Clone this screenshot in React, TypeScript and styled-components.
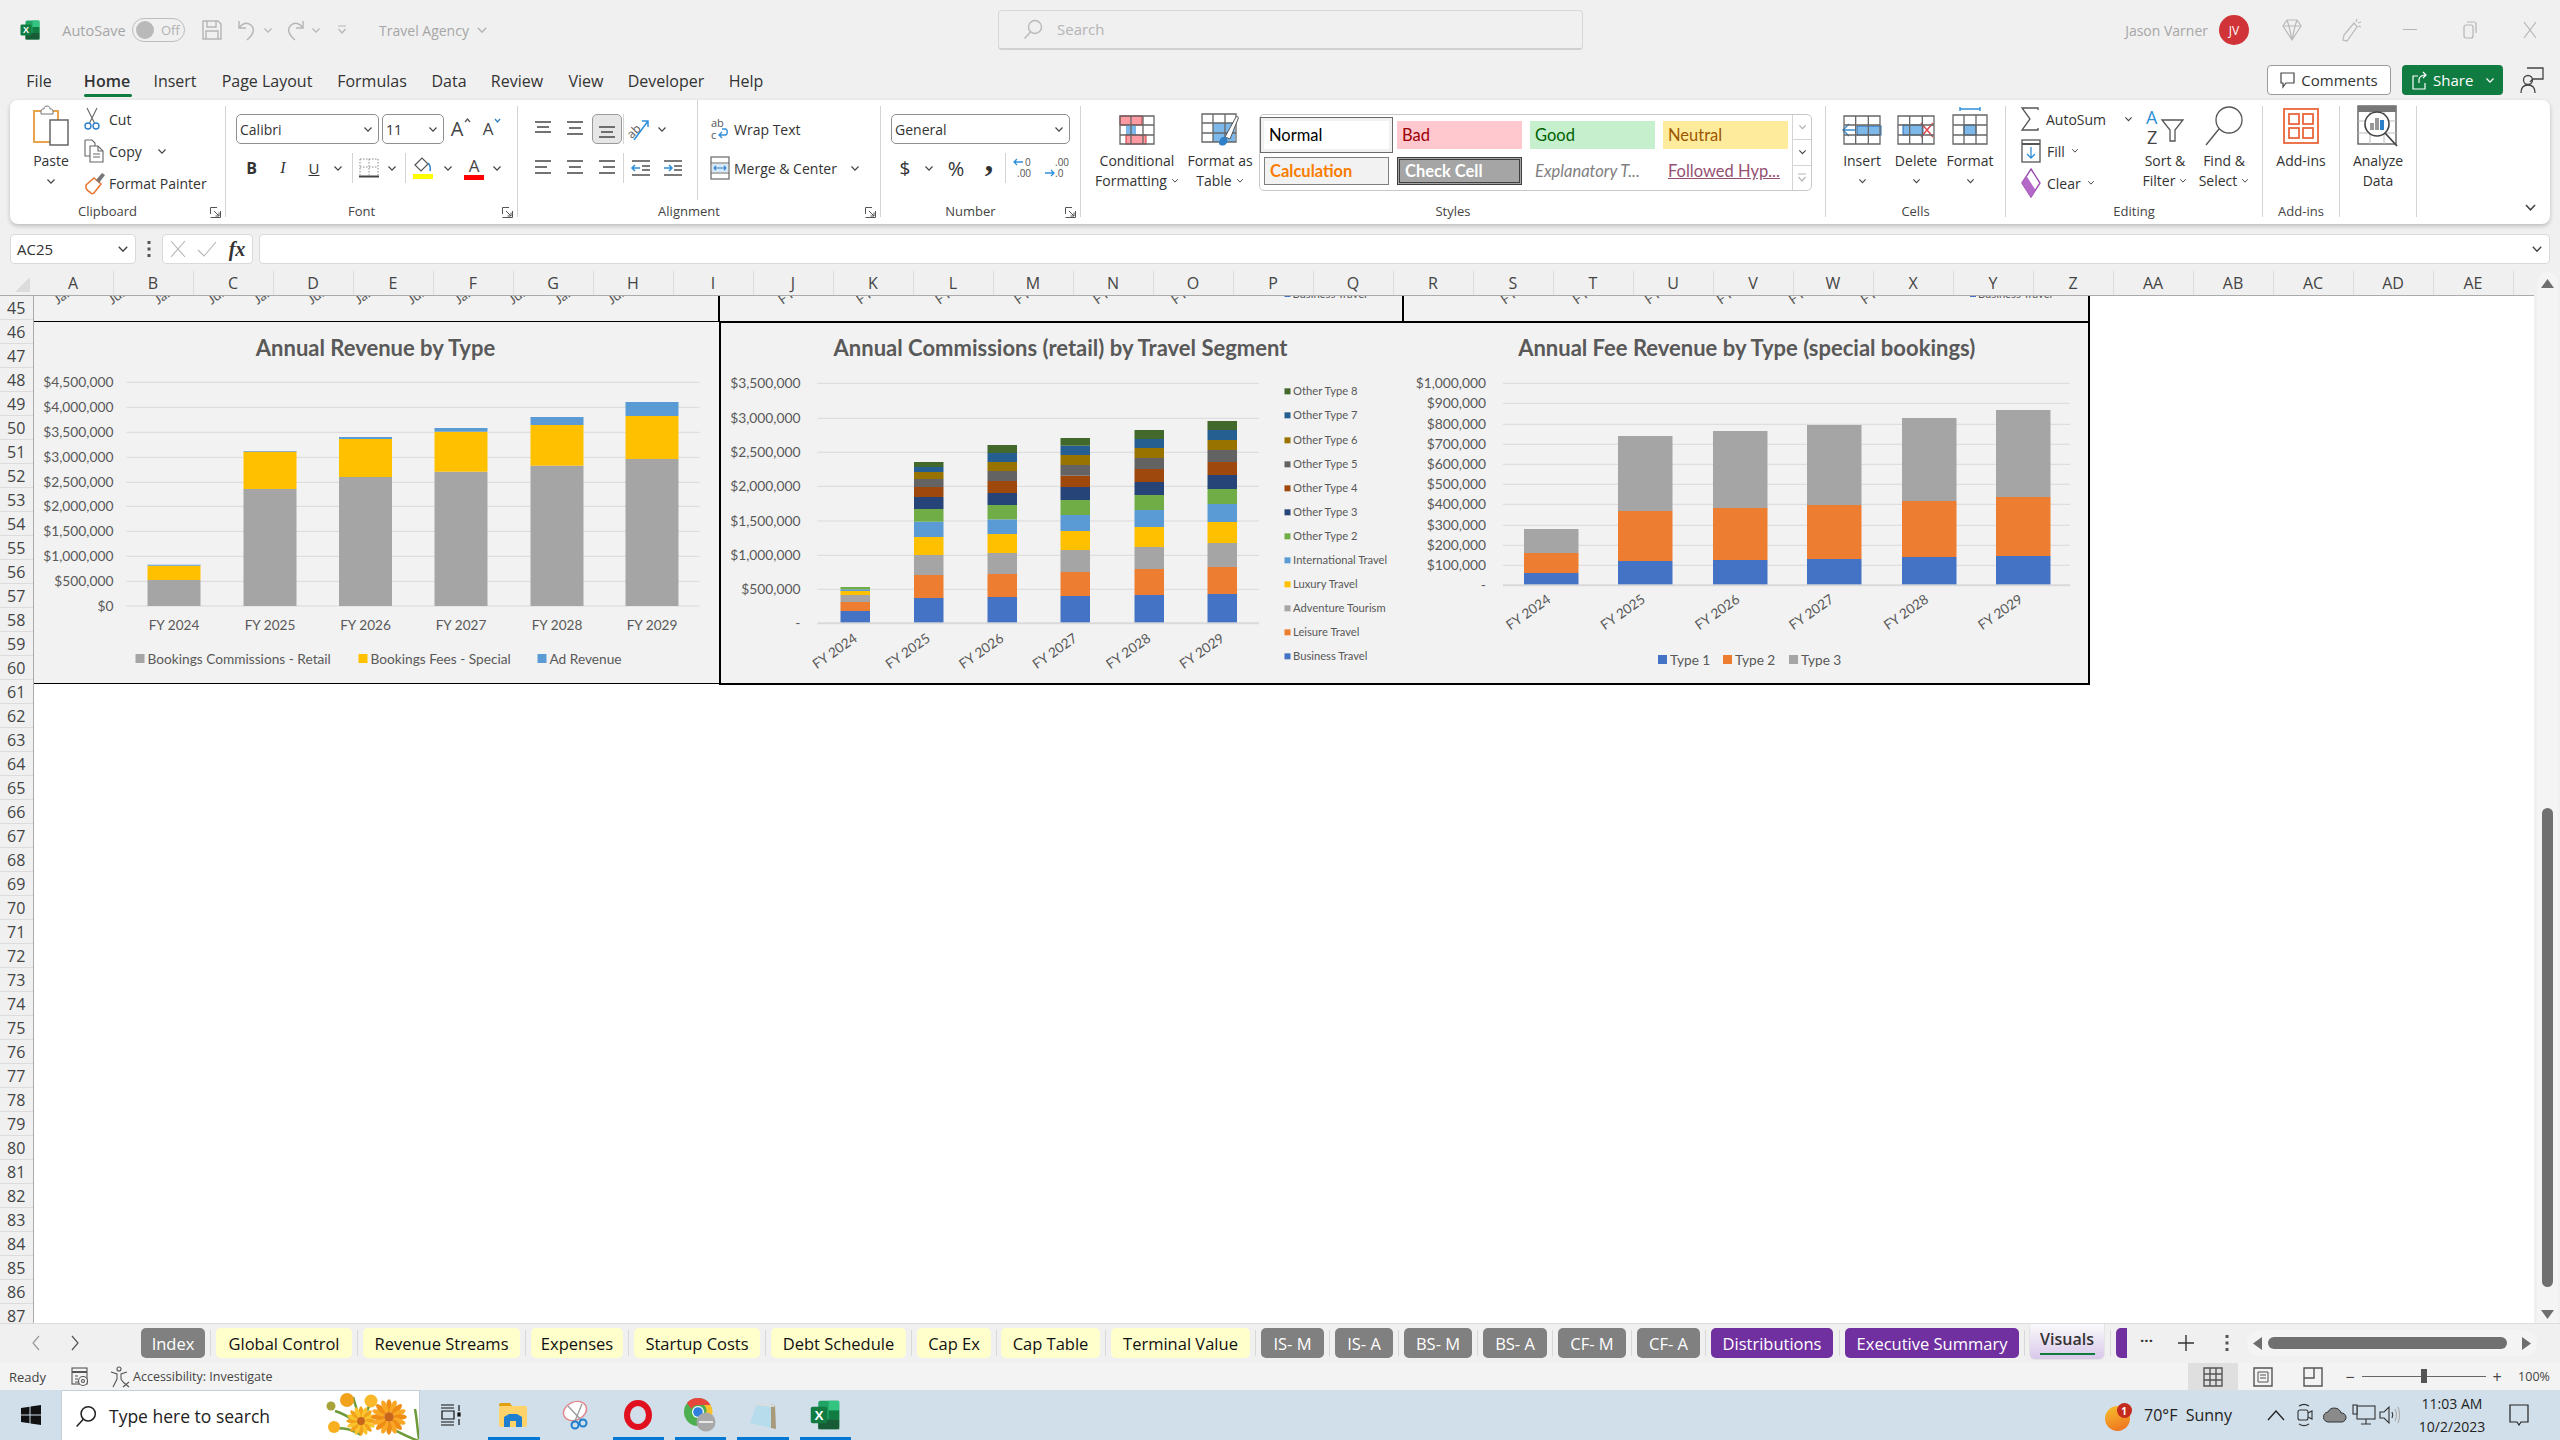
import React from 'react';
import styled, { createGlobalStyle } from 'styled-components';

const UI = `"Open Sans", "Noto Sans", sans-serif`;
const CAL = `Lato, "Liberation Sans", sans-serif`;

const Global = createGlobalStyle`
  html, body { margin: 0; padding: 0; background: #f0f0f0; }
  body { width: 2560px; height: 1440px; overflow: hidden; font-family: ${UI}; color: #333; }
  * { box-sizing: border-box; }
  svg { display: block; flex: none; overflow: visible; }
`;

const Window = styled.div`
  width: 2560px;
  height: 1440px;
  display: flex;
  flex-direction: column;
  overflow: hidden;
`;

const Cell = styled.div<{ $w?: number; $ml?: number; $c?: string; $fs?: number }>`
  display: flex;
  align-items: center;
  justify-content: center;
  flex: none;
  height: 100%;
  white-space: nowrap;
  width: ${p => (p.$w ? `${p.$w}px` : 'auto')};
  margin-left: ${p => p.$ml || 0}px;
  color: ${p => p.$c || 'inherit'};
  font-size: ${p => p.$fs || 14}px;
`;

/* ---------- title bar ---------- */
const TitleBar = styled.div`
  height: 62px;
  display: flex;
  flex: none;
`;
const TitleLeft = styled.div`
  width: 998px;
  height: 60px;
  padding-left: 20px;
  display: flex;
  color: #a6a6a6;
`;
const SearchBox = styled.div`
  width: 585px;
  height: 40px;
  margin-top: 10px;
  padding: 0 0 2px 24px;
  display: flex;
  align-items: center;
  gap: 14px;
  border: 1px solid #d8d8d8;
  border-bottom: 2px solid #d0d0d0;
  border-radius: 4px;
  font-size: 15px;
  color: #b4b4b4;
`;
const TitleRight = styled.div`
  flex: 1;
  height: 60px;
  display: flex;
  justify-content: flex-end;
  color: #a6a6a6;
`;
const Avatar = styled.div`
  width: 30px;
  height: 30px;
  border-radius: 50%;
  background: #d13438;
  color: #fff;
  font-size: 12px;
  display: flex;
  align-items: center;
  justify-content: center;
`;
const Toggle = styled.div`
  width: 53px;
  height: 24px;
  border: 1.5px solid #bdbdbd;
  border-radius: 12px;
  display: flex;
  align-items: center;
  padding-left: 3px;
  gap: 7px;
  font-size: 13px;
  color: #b0b0b0;
  &::before {
    content: '';
    width: 18px;
    height: 18px;
    border-radius: 50%;
    background: #b9b9b9;
  }
`;

/* ---------- menu ---------- */
const MenuBar = styled.div`
  height: 38px;
  padding-left: 15px;
  display: flex;
  align-items: flex-start;
  flex: none;
`;
const MenuItem = styled.div<{ $w: number; $on?: boolean }>`
  width: ${p => p.$w}px;
  height: 38px;
  display: flex;
  align-items: center;
  justify-content: center;
  font-size: 16px;
  color: #333;
  position: relative;
  font-weight: ${p => (p.$on ? 600 : 400)};
  &::after {
    content: ${p => (p.$on ? "''" : 'none')};
    position: absolute;
    left: 21px;
    right: 19px;
    top: 32px;
    height: 3px;
    background: #107c41;
    border-radius: 2px;
  }
`;
const MenuEnd = styled.div`
  margin-left: auto;
  display: flex;
  align-items: center;
  height: 30px;
  margin-top: 3px;
`;
const CommentsBtn = styled.div`
  width: 124px;
  height: 30px;
  background: #fff;
  border: 1px solid #9a9a9a;
  border-radius: 4px;
  display: flex;
  align-items: center;
  justify-content: center;
  gap: 6px;
  font-size: 15px;
`;
const ShareBtn = styled.div`
  width: 101px;
  height: 30px;
  margin-left: 11px;
  background: #107c41;
  color: #fff;
  border-radius: 4px;
  display: flex;
  align-items: center;
  padding-left: 10px;
  gap: 6px;
  font-size: 15px;
`;

/* ---------- ribbon ---------- */
const Ribbon = styled.div`
  margin: 0 10px;
  height: 124px;
  background: #fff;
  border-radius: 8px;
  box-shadow: 0 2px 4px rgba(0, 0, 0, 0.22);
  display: flex;
  flex: none;
  position: relative;
  font-size: 14px;
`;
const Group = styled.div<{ $w: number }>`
  width: ${p => p.$w}px;
  flex: none;
  display: flex;
  flex-direction: column;
  position: relative;
`;
const GroupBody = styled.div`
  height: 100px;
  display: flex;
`;
const GroupLabel = styled.div<{ $launch?: boolean }>`
  height: 22px;
  display: flex;
  align-items: center;
  justify-content: center;
  font-size: 13px;
  color: #444;
  padding-right: ${p => (p.$launch ? 20 : 0)}px;
`;
const Launcher = styled.div`
  position: absolute;
  right: 4px;
  bottom: 6px;
`;
const GroupSep = styled.div`
  width: 1px;
  margin: 6px 0 7px;
  background: #d4d4d4;
  flex: none;
`;
const Rows = styled.div<{ $w?: number; $pl?: number; $sep?: boolean }>`
  display: flex;
  flex-direction: column;
  padding-top: 14px;
  flex: none;
  width: ${p => (p.$w ? `${p.$w}px` : 'auto')};
  padding-left: ${p => p.$pl || 0}px;
  border-left: ${p => (p.$sep ? '1px solid #d4d4d4' : 'none')};
`;
const Row = styled.div<{ $h: number; $mt?: number }>`
  display: flex;
  align-items: center;
  height: ${p => p.$h}px;
  margin-top: ${p => p.$mt || 0}px;
`;
const Combo = styled.div<{ $w: number; $ml?: number }>`
  width: ${p => p.$w}px;
  margin-left: ${p => p.$ml || 0}px;
  height: 30px;
  flex: none;
  border: 1px solid #8f8f8f;
  border-radius: 5px;
  display: flex;
  align-items: center;
  justify-content: space-between;
  padding: 0 5px 0 3px;
  font-size: 14px;
`;
const RowSep = styled.div`
  width: 1px;
  height: 30px;
  background: #d4d4d4;
  flex: none;
`;
const Pressed = styled.div`
  width: 30px;
  height: 30px;
  background: #e6e6e6;
  border: 1px solid #9a9a9a;
  border-radius: 5px;
  display: flex;
  align-items: center;
  justify-content: center;
`;
const Big = styled.div<{ $w: number; $ml?: number }>`
  width: ${p => p.$w}px;
  margin-left: ${p => p.$ml || 0}px;
  flex: none;
  display: flex;
  flex-direction: column;
  align-items: center;
  font-size: 14px;
  line-height: 20px;
  color: #333;
  white-space: nowrap;
`;
const BigIcon = styled.div<{ $pt?: number }>`
  height: 51px;
  padding-top: ${p => p.$pt || 0}px;
  display: flex;
  align-items: center;
  justify-content: center;
`;
const BigLine = styled.div`
  height: 20px;
  display: flex;
  align-items: center;
  gap: 4px;
`;
const SmallList = styled.div<{ $w?: number; $pl: number }>`
  width: ${p => (p.$w ? `${p.$w}px` : 'auto')};
  padding: 3px 0 0 ${p => p.$pl}px;
  flex: none;
  display: flex;
  flex-direction: column;
`;
const SmallItem = styled.div<{ $gap?: number }>`
  height: 32px;
  display: flex;
  align-items: center;
  gap: ${p => p.$gap || 7}px;
  white-space: nowrap;
`;
const GrowLetter = styled.span<{ $fs: number }>`
  font-size: ${p => p.$fs}px;
  line-height: 24px;
  color: #444;
`;
const GrowWrap = styled.div`
  display: flex;
  align-items: flex-start;
  gap: 1px;
  height: 24px;
`;
const ColorLetter = styled.div<{ $bar: string }>`
  width: 20px;
  height: 24px;
  font-size: 17px;
  line-height: 19px;
  text-align: center;
  color: #444;
  border-bottom: 5px solid ${p => p.$bar};
`;
const Bold = styled(Cell)`
  font-weight: 700;
`;
const Italic = styled(Cell)`
  font-style: italic;
  font-family: "Liberation Serif", serif;
`;
const Under = styled(Cell)`
  text-decoration: underline;
`;
const CommaGlyph = styled(Cell)`
  font-weight: 700;
  font-family: "Liberation Serif", serif;
  padding-bottom: 16px;
`;
const Gallery = styled.div`
  width: 553px;
  height: 77px;
  margin: 14px 0 0 -1px;
  flex: none;
  border: 1px solid #c8c8c8;
  border-radius: 5px;
  padding-left: 4px;
  display: flex;
`;
const StyleGrid = styled.div`
  display: grid;
  grid-template-columns: repeat(4, 125px);
  grid-auto-rows: 28px;
  column-gap: 8px;
  row-gap: 8px;
  padding-top: 6px;
`;
const StyleCell = styled.div<{ $bg?: string; $c: string; $bold?: boolean; $it?: boolean; $bd?: string; $u?: boolean }>`
  background: ${p => p.$bg || 'transparent'};
  color: ${p => p.$c};
  font-weight: ${p => (p.$bold ? 700 : 400)};
  font-style: ${p => (p.$it ? 'italic' : 'normal')};
  border: ${p => p.$bd || 'none'};
  font-family: ${CAL};
  font-size: 16.5px;
  padding-left: 5px;
  display: flex;
  align-items: center;
  white-space: nowrap;
  position: relative;
  text-decoration: ${p => (p.$u ? 'underline' : 'none')};
`;
const NormalCell = styled(StyleCell)`
  outline: 1px solid #6a6a6a;
  outline-offset: 3px;
  box-shadow: 0 0 0 3px #f1f1f1;
`;
const GalleryScroll = styled.div`
  width: 19px;
  margin-left: auto;
  border-left: 1px solid #d4d4d4;
  display: flex;
  flex-direction: column;
`;
const GalleryBtn = styled.div<{ $line?: boolean }>`
  flex: 1;
  display: flex;
  align-items: center;
  justify-content: center;
  border-top: ${p => (p.$line ? '1px solid #d4d4d4' : 'none')};
`;
const Collapse = styled.div`
  position: absolute;
  right: 13px;
  bottom: 12px;
`;

/* ---------- formula bar ---------- */
const FormulaBar = styled.div`
  height: 30px;
  margin-top: 10px;
  padding: 0 10px;
  display: flex;
  flex: none;
`;
const FieldBox = styled.div<{ $w?: number }>`
  width: ${p => (p.$w ? `${p.$w}px` : 'auto')};
  flex: ${p => (p.$w ? 'none' : '1')};
  height: 30px;
  background: #fff;
  border: 1px solid #dadada;
  border-radius: 4px;
  display: flex;
  align-items: center;
  font-size: 15px;
`;
const NameBox = styled(FieldBox)`
  padding: 0 6px;
  justify-content: space-between;
`;
const FormulaInput = styled(FieldBox)`
  padding-right: 6px;
  justify-content: flex-end;
`;
const FxMark = styled(Cell)`
  font-family: "Liberation Serif", serif;
  font-style: italic;
  font-weight: 700;
`;

/* ---------- sheet ---------- */
const Sheet = styled.div`
  flex: 1;
  margin-top: 6px;
  display: flex;
  min-height: 0;
`;
const SheetMain = styled.div`
  width: 2534px;
  flex: none;
  display: flex;
  flex-direction: column;
`;
const ColHeader = styled.div`
  height: 26px;
  display: flex;
  border-bottom: 1px solid #ababab;
  flex: none;
`;
const Corner = styled.div`
  width: 33.5px;
  flex: none;
  position: relative;
  &::after {
    content: '';
    position: absolute;
    right: 4px;
    bottom: 3px;
    border-left: 15px solid transparent;
    border-bottom: 15px solid #dcdcdc;
  }
`;
const ColHead = styled.div`
  width: 80px;
  flex: none;
  margin-top: 1px;
  padding-bottom: 1px;
  border-right: 1px solid #dcdcdc;
  display: flex;
  align-items: center;
  justify-content: center;
  font-size: 16px;
  color: #444;
`;
const SheetBody = styled.div`
  flex: 1;
  display: flex;
  overflow: hidden;
  min-height: 0;
`;
const RowHeads = styled.div`
  width: 33.5px;
  flex: none;
  border-right: 1px solid #ababab;
`;
const RowHead = styled.div`
  height: 24px;
  border-bottom: 1px solid #dcdcdc;
  display: flex;
  align-items: center;
  justify-content: center;
  font-size: 16px;
  color: #444;
`;
const Canvas = styled.div`
  flex: 1;
  background: #fff;
`;
const BandRow = styled.div`
  display: flex;
  height: 25px;
`;
const BandPart = styled.div<{ $w: number; $bl?: number; $br?: number }>`
  width: ${p => p.$w}px;
  flex: none;
  background: #f2f2f2;
  border-left: ${p => p.$bl || 0}px solid #000;
  border-right: ${p => p.$br || 0}px solid #000;
  overflow: hidden;
`;
const ChartRow = styled.div`
  display: flex;
  align-items: flex-start;
`;
const ChartCard = styled.div<{ $w: number; $h: number; $heavy?: boolean; $right?: boolean; $noleft?: boolean }>`
  width: ${p => p.$w}px;
  height: ${p => p.$h}px;
  flex: none;
  background: #f2f2f2;
  border-style: solid;
  border-color: #000;
  border-width: ${p => (p.$heavy ? 2 : 1)}px ${p => (p.$right ? 2 : 0)}px ${p => (p.$heavy ? 2 : 1)}px ${p => (p.$heavy && !p.$noleft ? 2 : 0)}px;
`;
const ChartSvg = styled.svg`
  width: 100%;
  height: 100%;
  font-family: ${CAL};
`;
const ChartTitle = styled.text`
  font-size: 22px;
  font-weight: 700;
  fill: #595959;
  text-anchor: middle;
`;
const Tick = styled.text`
  font-size: 13.8px;
  fill: #595959;
  text-anchor: end;
`;
const Cat = styled.text<{ $start?: boolean }>`
  font-size: 13.6px;
  fill: #595959;
  text-anchor: ${p => (p.$start ? 'start' : 'middle')};
`;
const Legend = styled.text<{ $fs?: number }>`
  font-size: ${p => p.$fs || 13.7}px;
  fill: #595959;
`;
const VScroll = styled.div`
  flex: 1;
  padding: 2px 2px 0 3px;
  display: flex;
`;
const VTrack = styled.div`
  flex: 1;
  background: #f4f4f4;
  border-radius: 10px 10px 0 0;
  display: flex;
  flex-direction: column;
  align-items: center;
  padding-top: 7px;
`;
const VThumb = styled.div`
  width: 11px;
  height: 479px;
  margin-top: 520px;
  background: #707070;
  border-radius: 6px;
`;
const VArrowDown = styled.div`
  margin-top: auto;
  margin-bottom: 4px;
`;

/* ---------- tabs ---------- */
const TabBar = styled.div`
  height: 40px;
  border-top: 1px solid #dcdcdc;
  display: flex;
  align-items: flex-start;
  padding: 4px 0 0 14px;
  flex: none;
  overflow: hidden;
`;
const NavCell = styled.div<{ $w: number; $mr?: number }>`
  width: ${p => p.$w}px;
  height: 30px;
  margin-right: ${p => p.$mr || 0}px;
  flex: none;
  display: flex;
  align-items: center;
  justify-content: center;
`;
const Dots = styled.span`
  font-size: 15px;
  font-weight: 700;
  padding-bottom: 6px;
`;
const Tab = styled.div<{ $w: number; $bg: string; $c: string }>`
  width: ${p => p.$w}px;
  height: 30px;
  flex: none;
  background: ${p => p.$bg};
  color: ${p => p.$c};
  border-radius: 5px;
  display: flex;
  align-items: center;
  justify-content: center;
  font-size: 16.5px;
  white-space: nowrap;
`;
const TabGap = styled.div<{ $w: number }>`
  width: ${p => p.$w}px;
  height: 26px;
  margin-top: 2px;
  flex: none;
  display: flex;
  justify-content: center;
  &::after {
    content: '';
    width: 1px;
    background: #d8d8d8;
  }
`;
const ActiveTab = styled.div`
  width: 74px;
  height: 36px;
  margin-top: -5px;
  flex: none;
  background: linear-gradient(#fbfbfb, #d8c8ea);
  border-radius: 0 0 5px 5px;
  box-shadow: 0 0 0 1px #e4e4e4;
  color: #333;
  font-size: 16px;
  font-weight: 600;
  display: flex;
  justify-content: center;
  padding-top: 5px;
  position: relative;
  &::after {
    content: '';
    position: absolute;
    left: 10px;
    right: 9px;
    bottom: 4px;
    height: 2px;
    background: #107c41;
  }
`;
const PeekTab = styled.div`
  width: 11px;
  height: 30px;
  flex: none;
  background: #7030a0;
  border-radius: 5px 0 0 5px;
`;
const HTrack = styled.div`
  width: 290px;
  height: 26px;
  margin-top: 2px;
  flex: none;
  background: #f4f4f4;
  border-radius: 13px;
  display: flex;
  align-items: center;
  padding: 0 6px;
`;
const HThumb = styled.div`
  width: 239px;
  height: 12px;
  margin: 0 15px 0 6px;
  background: #707070;
  border-radius: 6px;
  flex: none;
`;

/* ---------- status ---------- */
const StatusBar = styled.div`
  height: 27px;
  background: #f3f3f3;
  display: flex;
  align-items: center;
  flex: none;
  font-size: 13px;
  color: #444;
  padding-left: 9px;
`;
const StatusRight = styled.div`
  margin-left: auto;
  display: flex;
  height: 27px;
  align-items: center;
`;
const ViewBtn = styled.div<{ $on?: boolean }>`
  width: 50px;
  height: 27px;
  background: ${p => (p.$on ? '#dfdfdf' : 'transparent')};
  display: flex;
  align-items: center;
  justify-content: center;
`;
const Slider = styled.div`
  width: 124px;
  height: 1px;
  background: #666;
  position: relative;
  &::after {
    content: '';
    position: absolute;
    left: 59px;
    top: -7px;
    width: 6px;
    height: 14px;
    background: #555;
  }
`;

/* ---------- taskbar ---------- */
const Taskbar = styled.div`
  height: 50px;
  background: #d1dfea;
  display: flex;
  flex: none;
`;
const TaskSearch = styled.div`
  width: 359px;
  height: 50px;
  background: #fff;
  border: 1px solid #c6cfd6;
  border-bottom: none;
  display: flex;
  align-items: center;
  padding-left: 13px;
  gap: 12px;
  font-size: 17.5px;
  color: #222;
  position: relative;
  overflow: hidden;
`;
const Flowers = styled.div`
  position: absolute;
  right: 0;
  top: 0;
`;
const TaskIcon = styled.div<{ $open?: boolean }>`
  width: 62.3px;
  height: 50px;
  flex: none;
  display: flex;
  align-items: center;
  justify-content: center;
  position: relative;
  &::after {
    content: ${p => (p.$open ? "''" : 'none')};
    position: absolute;
    left: 6px;
    right: 5px;
    bottom: 0;
    height: 3px;
    background: #0078d4;
  }
`;
const Tray = styled.div`
  margin-left: auto;
  display: flex;
  height: 50px;
  color: #222;
`;
const TrayText = styled(Cell)`
  justify-content: flex-start;
  padding-left: 2px;
`;
const Clock = styled.div`
  width: 100px;
  display: flex;
  flex-direction: column;
  align-items: center;
  justify-content: center;
  font-size: 14px;
  line-height: 23px;
`;
const WeatherBadge = styled.div`
  width: 32px;
  height: 38px;
  margin-right: 12px;
  flex: none;
  position: relative;
  &::before {
    content: '';
    position: absolute;
    left: 2px;
    top: 10px;
    width: 25px;
    height: 25px;
    border-radius: 50%;
    background: linear-gradient(160deg, #f6c12e, #ee6c1e);
  }
`;
const BadgeDot = styled.div`
  position: absolute;
  left: 14px;
  top: 7px;
  width: 15px;
  height: 15px;
  border-radius: 50%;
  background: #c42b1c;
  color: #fff;
  font-size: 10px;
  font-weight: 700;
  display: flex;
  align-items: center;
  justify-content: center;
`;

/* ---------- small drawings ---------- */
const Chev = ({ c = '#444', w = 10 }: { c?: string; w?: number }) => (
  <svg width={w} height={w * 0.7} viewBox="0 0 10 7" fill="none">
    <path d="M1.5 1.5 5 5.2l3.5-3.7" stroke={c} strokeWidth="1.2" />
  </svg>
);

const XlLogo = ({ s = 20 }: { s?: number }) => (
  <svg width={s} height={s} viewBox="0 0 20 20">
    <rect x="5.5" y="0.5" width="14" height="19" rx="1.5" fill="#21a366" />
    <rect x="12.5" y="0.5" width="7" height="6.5" fill="#33c481" />
    <rect x="12.5" y="7" width="7" height="6" fill="#107c41" />
    <rect x="5.5" y="13" width="14" height="6.5" fill="#185c37" />
    <rect x="0.5" y="4.5" width="11" height="11" rx="1.2" fill="#107c41" />
    <text x="6" y="13" fontSize="9" fontWeight="700" fill="#fff" textAnchor="middle" fontFamily="Liberation Sans">X</text>
  </svg>
);

const SaveIcon = () => (
  <svg width="20" height="20" viewBox="0 0 20 20" fill="none" stroke="#b5b5b5" strokeWidth="1.4">
    <path d="M1 1h15l3 3v15H1z" /><path d="M5 1v6h9V1M4 19v-8h12v8" />
  </svg>
);
const UndoIcon = ({ flip }: { flip?: boolean }) => (
  <svg width="20" height="22" viewBox="0 0 20 22" fill="none" stroke="#b5b5b5" strokeWidth="1.4" style={{ transform: flip ? 'scaleX(-1)' : undefined }}>
    <path d="M2 2v7h7M2 9c3-5 8-6 12-3 4 4 3 9-4 15" />
  </svg>
);
const CustomizeIcon = () => (
  <svg width="10" height="10" viewBox="0 0 10 10" fill="none" stroke="#b5b5b5" strokeWidth="1.2">
    <path d="M1 1h8M1.5 4 5 8l3.5-4" />
  </svg>
);
const SearchGlass = ({ s = 20, c = '#b9b9b9' }: { s?: number; c?: string }) => (
  <svg width={s} height={s} viewBox="0 0 20 20" fill="none" stroke={c} strokeWidth="1.4">
    <circle cx="12" cy="8" r="6.5" /><path d="M7.5 13 1.5 19.5" />
  </svg>
);
const Diamond = () => (
  <svg width="20" height="22" viewBox="0 0 20 22" fill="none" stroke="#b9b9b9" strokeWidth="1.2">
    <path d="M5 1h10l4 6-9 14L1 7zM1 7h18M5 1l2 6 3 14 3-14 2-6" />
  </svg>
);
const PenIcon = () => (
  <svg width="22" height="24" viewBox="0 0 22 24" fill="none" stroke="#b9b9b9" strokeWidth="1.2">
    <path d="M13 5 3 17l-1 5 4 1 10-14zM16 1l-1 3M20 4l-3 1M20 9l-3-1" />
  </svg>
);
const WinMin = () => <svg width="14" height="2"><rect width="14" height="1" fill="#b5b5b5" /></svg>;
const WinRestore = () => (
  <svg width="14" height="18" viewBox="0 0 14 18" fill="none" stroke="#b5b5b5" strokeWidth="1.2">
    <rect x="1" y="4" width="9" height="13" rx="2" /><path d="M4 1h7a2 2 0 0 1 2 2v9" />
  </svg>
);
const WinClose = () => (
  <svg width="14" height="18" viewBox="0 0 14 18" stroke="#b5b5b5" strokeWidth="1.2"><path d="M1 1l12 16M13 1 1 17" /></svg>
);
const CommentGlyph = ({ c = '#444' }: { c?: string }) => (
  <svg width="15" height="17" viewBox="0 0 15 17" fill="none" stroke={c} strokeWidth="1.2">
    <path d="M1 1h13v10H6l-3 4v-4H1z" />
  </svg>
);
const ShareGlyph = () => (
  <svg width="15" height="19" viewBox="0 0 15 19" fill="none" stroke="#fff" strokeWidth="1.2">
    <path d="M6 5H1v13h12v-6M7 12V8c1-3 3-4 7-4M11 1l3 3-3 3" />
  </svg>
);
const PeopleGlyph = () => (
  <svg width="24" height="28" viewBox="0 0 24 28" fill="none" stroke="#444" strokeWidth="1.3">
    <path d="M7 2h16v11H13l-3 3" /><circle cx="8" cy="14" r="4.5" /><path d="M1 27c0-6 3-8 7-8s7 2 7 8" />
  </svg>
);

const PasteIcon = () => (
  <svg width="36" height="42" viewBox="0 0 36 42" fill="none">
    <rect x="1" y="6" width="24" height="31" fill="#fff" stroke="#e9a34a" strokeWidth="2" />
    <path d="M8 6c0-2 2-2 3-2 0-2 1-3 3-3s3 1 3 3c1 0 3 0 3 2v3H8z" fill="#fff" stroke="#777" />
    <rect x="17" y="15" width="18" height="25" fill="#fff" stroke="#666" strokeWidth="1.5" />
  </svg>
);
const CutIcon = () => (
  <svg width="16" height="24" viewBox="0 0 16 24" fill="none">
    <path d="M3 1l7.5 15M13 1 5.5 16" stroke="#666" strokeWidth="1.1" />
    <circle cx="4" cy="19" r="3" stroke="#2f80c8" strokeWidth="1.4" />
    <circle cx="12" cy="19" r="3" stroke="#2f80c8" strokeWidth="1.4" />
  </svg>
);
const CopyIcon = () => (
  <svg width="20" height="24" viewBox="0 0 20 24" fill="none" stroke="#666" strokeWidth="1.1">
    <path d="M1 1h7l3 3v3" /><path d="M1 1v16h5" />
    <path d="M6 7h8l5 5v11H6z" fill="#fff" /><path d="M14 7v5h5M9 15h7M9 18h7" />
  </svg>
);
const BrushIcon = () => (
  <svg width="22" height="24" viewBox="0 0 22 24" fill="none">
    <path d="M2 14l8-7 7 6-7 9c-2 1-3 1-4-1-2 0-3-2-4-4z" fill="#fff" stroke="#e8722a" strokeWidth="1.5" />
    <path d="M12 9l6-7 3 2-6 8z" fill="#777" />
  </svg>
);
const Launch = () => (
  <svg width="11" height="11" viewBox="0 0 11 11" fill="none" stroke="#555">
    <path d="M.5 7V.5H7M.5 10.5h10V4M4 4l5 5M9 5.5V9H5.5" />
  </svg>
);
const GrowMark = ({ up }: { up?: boolean }) => (
  <svg width="7" height="6" viewBox="0 0 7 6" fill="none">
    <path d={up ? 'M1 5l2.5-3L6 5' : 'M1 2l2.5 3L6 2'} stroke={up ? '#555' : '#2f80c8'} strokeWidth="1.3" />
  </svg>
);
const Borders = () => (
  <svg width="20" height="20" viewBox="0 0 20 20" fill="none" stroke="#888" strokeDasharray="1.5 1.5">
    <path d="M1 1h18v16M1 1v16M10 1v16M1 9h18" /><path d="M0 18.5h20" stroke="#444" strokeWidth="2" strokeDasharray="none" />
  </svg>
);
const FillColor = () => (
  <svg width="22" height="24" viewBox="0 0 22 24" fill="none">
    <path d="M3 9l7-7 6 6-7 7z" stroke="#555" strokeWidth="1.2" fill="#fff" />
    <path d="M16 7c2 2 3 4 2 8" stroke="#2f80c8" strokeWidth="1.5" />
    <rect x="1" y="18" width="20" height="5" fill="#ffff00" />
  </svg>
);
const Lines = ({ rows }: { rows: [number, number, number][] }) => (
  <svg width="20" height="20" viewBox="0 0 20 20" stroke="#505050" strokeWidth="1.6">
    {rows.map((r, i) => <path key={i} d={`M${r[0]} ${r[2]}H${r[1]}`} />)}
  </svg>
);
const Indent = ({ rev }: { rev?: boolean }) => (
  <svg width="20" height="18" viewBox="0 0 20 18" fill="none">
    <path d="M1 2h18M1 16h18" stroke="#505050" strokeWidth="1.6" />
    <path d="M11 7h8M11 11h8" stroke="#505050" strokeWidth="1.6" />
    <path d={rev ? 'M9 9H1M4 6 1 9l3 3' : 'M1 9h8M6 6l3 3-3 3'} stroke="#2f8fd8" strokeWidth="1.5" />
  </svg>
);
const Orient = () => (
  <svg width="22" height="26" viewBox="0 0 22 26" fill="none">
    <text x="-5" y="17" fontSize="12" fill="#555" transform="rotate(-45 6 12)" fontFamily={UI}>ab</text>
    <path d="M4 24 18 5M12 5h6v6" stroke="#2f8fd8" strokeWidth="1.5" />
  </svg>
);
const WrapIcon = () => (
  <svg width="20" height="24" viewBox="0 0 20 24">
    <text x="1" y="10" fontSize="11" fill="#555" fontFamily={UI}>ab</text>
    <text x="1" y="22" fontSize="11" fill="#555" fontFamily={UI}>c</text>
    <path d="M9 18h6c3 0 3-6 0-6h-3M12 15l-3 3 3 3" fill="none" stroke="#2f8fd8" strokeWidth="1.3" />
  </svg>
);
const MergeIcon = () => (
  <svg width="20" height="24" viewBox="0 0 20 24" fill="none">
    <rect x="1" y="1" width="18" height="22" fill="#fff" stroke="#666" strokeWidth="1.2" />
    <path d="M1 7h18M1 17h18" stroke="#666" />
    <rect x="2" y="8" width="16" height="8" fill="#d5e8f8" />
    <path d="M4 12h12M4 12l2-2M4 12l2 2M16 12l-2-2M16 12l-2 2" stroke="#2f80c8" strokeWidth="1.2" />
  </svg>
);
const DecIcon = ({ more }: { more?: boolean }) => (
  <svg width="22" height="22" viewBox="0 0 22 22">
    <text x={more ? 11 : 13} y="9" fontSize="10" fill="#555" fontFamily={UI}>{more ? '.00' : '0'}</text>
    <text x={more ? 11 : 5} y="20" fontSize="10" fill="#555" fontFamily={UI}>{more ? '.0' : '.00'}</text>
    <path d={more ? 'M1 16h9M7 13l3 3-3 3' : 'M11 5H2M5 2 2 5l3 3'} stroke="#2f8fd8" strokeWidth="1.3" fill="none" />
  </svg>
);
const TableGrid = ({ children, w = 36, h = 30 }: { children?: React.ReactNode; w?: number; h?: number }) => (
  <svg width={w} height={h} viewBox={`0 0 ${w} ${h}`} fill="none">
    <rect x="1" y="1" width={w - 2} height={h - 2} fill="#fff" />
    {children}
    <path d={`M1 1H${w - 1}V${h - 1}H1zM1 ${h / 3}H${w - 1}M1 ${(2 * h) / 3}H${w - 1}M${w / 3} 1V${h - 1}M${(2 * w) / 3} 1V${h - 1}`} stroke="#666" strokeWidth="1.3" />
  </svg>
);
const CondIcon = () => (
  <TableGrid>
    <rect x="1" y="1" width="22" height="9" fill="#ff9aa2" stroke="#d13438" />
    <rect x="7" y="10" width="10" height="10" fill="#7db8ea" />
    <rect x="7" y="20" width="20" height="9" fill="#ff9aa2" stroke="#d13438" />
  </TableGrid>
);
const FormatTableIcon = () => (
  <svg width="38" height="34" viewBox="0 0 38 34" fill="none">
    <rect x="1" y="1" width="34" height="28" fill="#fff" />
    <rect x="12" y="10" width="22" height="19" fill="#7db8ea" />
    <path d="M1 1h34v28H1zM1 10h34M1 20h34M12 1v28M24 1v28" stroke="#666" strokeWidth="1.3" />
    <path d="M24 24 35 4c1-2 3 0 2 2L29 26z" fill="#fff" stroke="#555" />
    <path d="M18 31c0-5 3-8 6-7 3 1 3 5 1 7-2 2-5 2-7 0z" fill="#2f80c8" />
  </svg>
);
const InsertCellsIcon = () => (
  <TableGrid w={38}>
    <rect x="14" y="11" width="24" height="9" fill="#7db8ea" stroke="#1e6fb8" />
    <path d="M13 15H1M6 9 0 15l6 6" stroke="#2f8fd8" strokeWidth="1.4" fill="#fff" />
  </TableGrid>
);
const DeleteCellsIcon = () => (
  <TableGrid w={38}>
    <rect x="6" y="10" width="20" height="10" fill="#7db8ea" stroke="#1e6fb8" />
    <path d="M24 8l12 14M36 8 24 22" stroke="#e0474c" strokeWidth="1.5" />
  </TableGrid>
);
const FormatCellsIcon = () => (
  <svg width="36" height="38" viewBox="0 0 36 38" fill="none">
    <path d="M8 2h20M8 0v4M28 0v4" stroke="#2f8fd8" strokeWidth="1.4" />
    <rect x="1" y="8" width="34" height="29" fill="#fff" />
    <rect x="12" y="18" width="12" height="10" fill="#7db8ea" stroke="#1e6fb8" />
    <path d="M1 8h34v29H1zM1 18h34M1 28h34M12 8v29M24 8v29" stroke="#666" strokeWidth="1.3" />
  </svg>
);
const SigmaIcon = () => (
  <svg width="18" height="24" viewBox="0 0 18 24" fill="none" stroke="#555" strokeWidth="1.3">
    <path d="M17 3V1H1l8 11-8 11h16v-2" />
  </svg>
);
const FillIcon = () => (
  <svg width="20" height="24" viewBox="0 0 20 24" fill="none">
    <rect x="1" y="1" width="18" height="22" stroke="#555" strokeWidth="1.3" />
    <path d="M1 5h18" stroke="#555" strokeWidth="2" />
    <path d="M10 8v11M6 15l4 4 4-4" stroke="#2f8fd8" strokeWidth="1.3" />
  </svg>
);
const ClearIcon = () => (
  <svg width="20" height="30" viewBox="0 0 20 30" fill="none">
    <path d="M10 1l9 14-9 14L1 15z" fill="#fff" stroke="#9b4fb0" strokeWidth="1.4" />
    <path d="M1 15l4.5-7 9 14L10 29z" fill="#b468c8" />
  </svg>
);
const SortIcon = () => (
  <svg width="38" height="38" viewBox="0 0 38 38" fill="none">
    <text x="0" y="17" fontSize="18" fill="#2f8fd8" fontFamily={UI}>A</text>
    <text x="1" y="37" fontSize="18" fill="#444" fontFamily={UI}>Z</text>
    <path d="M16 13h21l-8 10v11h-5V23z" stroke="#555" strokeWidth="1.3" />
  </svg>
);
const FindIcon = () => (
  <svg width="38" height="40" viewBox="0 0 38 40" fill="none" stroke="#555" strokeWidth="1.3">
    <circle cx="24" cy="14" r="13" /><path d="M14 23 1 39" />
  </svg>
);
const AddinsIcon = () => (
  <svg width="36" height="36" viewBox="0 0 36 36" fill="none" stroke="#e8673c" strokeWidth="1.8">
    <rect x="1" y="1" width="34" height="34" /><rect x="6" y="6" width="10" height="10" /><rect x="20" y="6" width="10" height="10" />
    <rect x="6" y="20" width="10" height="10" /><rect x="20" y="20" width="10" height="10" />
  </svg>
);
const AnalyzeIcon = () => (
  <svg width="42" height="42" viewBox="0 0 42 42" fill="none">
    <rect x="1" y="1" width="38" height="38" fill="#fff" stroke="#555" strokeWidth="1.3" />
    <rect x="1" y="1" width="38" height="6" fill="#777" />
    <path d="M1 16h38M1 28h38M13 7v32M27 7v32" stroke="#bbb" />
    <circle cx="20" cy="19" r="12" fill="#fff" stroke="#444" strokeWidth="1.6" />
    <rect x="13" y="18" width="4" height="7" fill="#999" /><rect x="18" y="13" width="4" height="12" fill="#999" /><rect x="23" y="15" width="4" height="10" fill="#2f80c8" />
    <path d="M28 28 40 41" stroke="#444" strokeWidth="1.8" />
  </svg>
);
const TriUp = ({ flip, c = '#6e6e6e' }: { flip?: boolean; c?: string }) => (
  <svg width="13" height="9" viewBox="0 0 13 9" style={{ transform: flip ? 'scaleY(-1)' : undefined }}>
    <path d="M6.5 0 13 9H0z" fill={c} />
  </svg>
);
const TriLeft = ({ flip }: { flip?: boolean }) => (
  <svg width="9" height="13" viewBox="0 0 9 13" style={{ transform: flip ? 'scaleX(-1)' : undefined }}>
    <path d="M0 6.5 9 0v13z" fill="#6e6e6e" />
  </svg>
);
const XMark = () => <svg width="16" height="18" viewBox="0 0 16 18" stroke="#b5b5b5" strokeWidth="1.1"><path d="M1 1l14 16M15 1 1 17" /></svg>;
const CheckMark = () => <svg width="20" height="16" viewBox="0 0 20 16" fill="none" stroke="#b5b5b5" strokeWidth="1.1"><path d="M1 9l6 6L19 1" /></svg>;
const VDots = ({ c = '#555' }: { c?: string }) => (
  <svg width="4" height="18" viewBox="0 0 4 18" fill={c}><rect x="0.5" y="1" width="3" height="3" /><rect x="0.5" y="7.5" width="3" height="3" /><rect x="0.5" y="14" width="3" height="3" /></svg>
);
const MacroIcon = () => (
  <svg width="18" height="20" viewBox="0 0 18 20" fill="none" stroke="#555" strokeWidth="1.1">
    <rect x="1" y="1" width="15" height="16" /><path d="M1 5h15" strokeWidth="2" /><circle cx="12" cy="14" r="4.5" fill="#f3f3f3" /><circle cx="12" cy="14" r="1.5" /><path d="M4 9h3M4 12h3M4 15h3" />
  </svg>
);
const AccessIcon = () => (
  <svg width="20" height="22" viewBox="0 0 20 22" fill="none" stroke="#555" strokeWidth="1.1">
    <circle cx="9" cy="3" r="2" /><path d="M1 6l6 2v5l-4 8M17 6l-6 2v5l2 3" /><path d="M13 16l6 5M19 16l-6 5" />
  </svg>
);
const GridView = () => (
  <svg width="20" height="20" viewBox="0 0 20 20" fill="none" stroke="#555" strokeWidth="1.4">
    <path d="M1 1h18v18H1zM1 7h18M1 13h18M7 1v18M13 1v18" />
  </svg>
);
const PageView = () => (
  <svg width="20" height="20" viewBox="0 0 20 20" fill="none" stroke="#555" strokeWidth="1.4">
    <path d="M1 1h18v18H1z" /><path d="M5 5h10v10H5zM7 8h6M7 11h6" strokeWidth="1" />
  </svg>
);
const BreakView = () => (
  <svg width="20" height="20" viewBox="0 0 20 20" fill="none" stroke="#555" strokeWidth="1.4">
    <path d="M1 1h18v18H1zM11 1v10H1" />
  </svg>
);
const WinLogo = () => (
  <svg width="20" height="20" viewBox="0 0 20 20" fill="#111">
    <path d="M0 3l8.5-1.2V9.5H0zM9.5 1.6 20 0v9.5H9.5zM0 10.5h8.5v7.7L0 17zM9.5 10.5H20V20L9.5 18.4z" />
  </svg>
);
const TaskView = () => (
  <svg width="22" height="22" viewBox="0 0 22 22" fill="none" stroke="#111" strokeWidth="1.2">
    <path d="M1 1h13M1 4h13M2 7h12v8H2zM1 18h13M1 21h13M19 1v6M19 15v6" /><rect x="18" y="9" width="2" height="3" fill="#111" />
  </svg>
);
const Explorer = () => (
  <svg width="28" height="24" viewBox="0 0 28 24">
    <path d="M0 2a2 2 0 0 1 2-2h9l2 3H0z" fill="#e0a010" />
    <rect x="0" y="3" width="28" height="21" rx="2" fill="#ffd369" />
    <path d="M5 24V14l5-3h8l5 3v10h-6v-6h-6v6z" fill="#1e7fd0" />
  </svg>
);
const Snip = () => (
  <svg width="28" height="30" viewBox="0 0 28 30" fill="none">
    <ellipse cx="13" cy="11" rx="12" ry="9" fill="#fff" stroke="#e0868c" strokeWidth="1.4" transform="rotate(-25 13 11)" />
    <path d="M6 6l13 14M20 4 13 21" stroke="#999" strokeWidth="1.3" />
    <circle cx="21" cy="23" r="3.5" stroke="#1e7fd0" strokeWidth="2" /><circle cx="13" cy="25" r="3.5" stroke="#1e7fd0" strokeWidth="2" />
  </svg>
);
const Opera = () => (
  <svg width="28" height="30" viewBox="0 0 28 30" fill="none">
    <ellipse cx="14" cy="15" rx="11" ry="12" stroke="#e0101e" strokeWidth="6" />
  </svg>
);
const Chrome = () => (
  <svg width="32" height="34" viewBox="0 0 32 34">
    <circle cx="14" cy="14" r="14" fill="#4caf50" />
    <path d="M14 0a14 14 0 0 1 12.5 7H14a7 7 0 0 0-6.5 4L3 5a14 14 0 0 1 11-5z" fill="#e8453c" />
    <path d="M26.500 7A14 14 0 0 1 14 28l6-10a7 7 0 0 0 0-11z" fill="#fbc02d" />
    <circle cx="14" cy="14" r="6" fill="#fff" /><circle cx="14" cy="14" r="4.800" fill="#2f7fe0" />
    <circle cx="22" cy="24" r="9.500" fill="#a8a8a8" /><rect x="15" y="23" width="14" height="2" fill="#e8e8e8" />
  </svg>
);
const Notepad = () => (
  <svg width="28" height="28" viewBox="0 0 28 28">
    <path d="M8 2 26 4l1 24-26-6z" fill="#b7dcec" /><path d="M22 3.500 26 4l1 24-5-1z" fill="#a89a7a" />
    <path d="M8 2 26 4 25 6 7 4z" fill="#ddd" />
  </svg>
);
const Petals = ({ cx, cy, r, c1, c2 }: { cx: number; cy: number; r: number; c1: string; c2: string }) => (
  <g>
    {Array.from({ length: 16 }).map((_, i) => (
      <ellipse key={i} cx={cx} cy={cy - r * 0.65} rx={r * 0.16} ry={r * 0.4} fill={i % 2 ? c1 : c2} transform={`rotate(${i * 22.5} ${cx} ${cy})`} />
    ))}
    <circle cx={cx} cy={cy} r={r * 0.28} fill="#c7651a" />
  </g>
);
const FlowerArt = () => (
  <svg width="96" height="50" viewBox="0 0 96 50" fill="none">
    <path d="M12 20c14 4 24 14 34 18M30 6l6 20M50 6l-6 14M8 38c12-2 20 0 30 6M62 34c12 6 22 12 34 16M92 18c2 10 2 18 4 30" stroke="#6f9a3a" strokeWidth="2.5" />
    <circle cx="8" cy="15" r="4.500" fill="#a7a33a" />
    <circle cx="24" cy="9" r="7" fill="#f3a21c" /><circle cx="48" cy="10" r="6.500" fill="#fbb82a" /><circle cx="11" cy="36" r="6" fill="#f8b020" />
    <Petals cx={38} cy={30} r={14} c1="#fbc32c" c2="#f2a31a" />
    <Petals cx={66} cy={26} r={17} c1="#f9a826" c2="#ee8c14" />
  </svg>
);
const Caret = () => <svg width="18" height="11" viewBox="0 0 18 11" fill="none" stroke="#222" strokeWidth="1.3"><path d="M1 10 9 1l8 9" /></svg>;
const MeetIcon = () => (
  <svg width="16" height="24" viewBox="0 0 16 24" fill="none" stroke="#333" strokeWidth="1.1">
    <path d="M2 3c3-2 7-2 10 0M2 21c3 2 7 2 10 0" /><rect x="1" y="7" width="10" height="10" rx="2" /><path d="M11 10l4-2v8l-4-2" />
  </svg>
);
const CloudIcon = () => (
  <svg width="24" height="16" viewBox="0 0 24 16">
    <path d="M6 15a5 5 0 0 1-1-10 7 7 0 0 1 13 1 4.500 4.500 0 0 1 1 9z" fill="#8a8a8a" stroke="#333" />
  </svg>
);
const NetIcon = () => (
  <svg width="24" height="22" viewBox="0 0 24 22" fill="none" stroke="#333" strokeWidth="1.1">
    <rect x="5" y="2" width="18" height="13" /><path d="M14 15v5M9 20h10" /><rect x="1" y="1" width="4" height="9" fill="#d1dfea" />
  </svg>
);
const SpeakerIcon = () => (
  <svg width="22" height="20" viewBox="0 0 22 20" fill="none" stroke="#333" strokeWidth="1.1">
    <path d="M1 7h4l5-5v16l-5-5H1zM13 7c1 2 1 4 0 6" /><path d="M16 4c2 4 2 8 0 12M19 2c2 5 2 11 0 16" stroke="#aaa" />
  </svg>
);
const NotifIcon = () => (
  <svg width="20" height="22" viewBox="0 0 20 22" fill="none" stroke="#222" strokeWidth="1.2">
    <path d="M1 1h18v17h-7l-2 3-2-3H1z" />
  </svg>
);
const NavArrow = ({ right, c }: { right?: boolean; c: string }) => (
  <svg width="10" height="18" viewBox="0 0 10 18" fill="none" stroke={c} strokeWidth="1.2">
    <path d={right ? 'M2 2l6 7-6 7' : 'M8 2 2 9l6 7'} />
  </svg>
);
const PlusMark = () => (
  <svg width="16" height="16" viewBox="0 0 16 16" stroke="#333" strokeWidth="1.4"><path d="M8 0v16M0 8h16" /></svg>
);

/* ---------- charts ---------- */
type TickDef = [number, string];
type BarDef = { x: number; tops: number[] };
type ChartDef = {
  box: [number, number, number, number];
  title: string;
  titleX: number;
  gridX: [number, number];
  tickX: number;
  ticks: TickDef[];
  bars: BarDef[];
  barW: number;
  bottom: number;
  colors: string[];
  catY: number;
  catX: number[];
  rotate?: boolean;
  axisW?: number;
};

const CATS = ['FY 2024', 'FY 2025', 'FY 2026', 'FY 2027', 'FY 2028', 'FY 2029'];
const zy = (z: number) => 260 + z / 3;
const zbar = (x: number, tops: number[]): BarDef => ({ x, tops: tops.map(zy) });

const BLUE = '#4472C4';
const ORANGE = '#ED7D31';
const GRAY = '#A5A5A5';
const GOLD = '#FFC000';
const SKY = '#5B9BD5';

const revenue: ChartDef = {
  box: [33.5, 322, 685, 361],
  title: 'Annual Revenue by Type',
  titleX: 375,
  gridX: [126, 699],
  tickX: 113,
  ticks: [[382.3, '$4,500,000'], [407.3, '$4,000,000'], [432.3, '$3,500,000'], [457.3, '$3,000,000'], [482.3, '$2,500,000'], [506.3, '$2,000,000'], [531.3, '$1,500,000'], [556.3, '$1,000,000'], [581.3, '$500,000'], [606, '$0']],
  bars: [
    { x: 147, tops: [580, 565.7, 564.7] },
    { x: 243, tops: [489, 451.7, 451] },
    { x: 338.5, tops: [477, 439, 437] },
    { x: 434, tops: [471.7, 431.7, 428] },
    { x: 530, tops: [465.7, 425, 417] },
    { x: 625, tops: [459, 416, 402] },
  ],
  barW: 53,
  bottom: 606,
  colors: [GRAY, GOLD, SKY],
  catY: 630,
  catX: [173.5, 269.5, 365, 460.5, 556.5, 651.5],
};

const commissions: ChartDef = {
  box: [720.5, 323, 683.5, 360],
  title: 'Annual Commissions (retail) by Travel Segment',
  titleX: 1060,
  gridX: [817, 1258.6],
  tickX: 800,
  ticks: [[383.3, '$3,500,000'], [418.3, '$3,000,000'], [452.3, '$2,500,000'], [486.3, '$2,000,000'], [521, '$1,500,000'], [555.3, '$1,000,000'], [589.3, '$500,000'], [623.3, '-']],
  bars: [
    zbar(840, [1053, 1026, 1005, 993, 988, 981]),
    zbar(913.5, [1014, 945, 885, 831, 785, 747, 711, 681, 657, 636, 621, 606]),
    zbar(987, [1011, 942, 879, 822, 778, 735, 699, 663, 633, 606, 579, 555]),
    zbar(1060, [1008, 936, 870, 813, 765, 720, 681, 647, 615, 585, 557, 534]),
    zbar(1134, [1005, 927, 861, 801, 750, 705, 666, 627, 594, 564, 537, 510]),
    zbar(1207, [1002, 921, 849, 786, 732, 687, 645, 606, 570, 540, 510, 483]),
  ],
  barW: 29.5,
  bottom: zy(1087),
  colors: [BLUE, ORANGE, GRAY, GOLD, SKY, '#70AD47', '#264478', '#9E480E', '#636363', '#997300', '#255E91', '#43682B'],
  catY: 655,
  catX: [837, 910, 983.5, 1057, 1130.4, 1204],
  rotate: true,
  axisW: 2,
};

const fees: ChartDef = {
  box: [1404, 323, 684, 360],
  title: 'Annual Fee Revenue by Type (special bookings)',
  titleX: 1746.7,
  gridX: [1503, 2070],
  tickX: 1486,
  ticks: [[383.3, '$1,000,000'], [403.3, '$900,000'], [424.3, '$800,000'], [444.3, '$700,000'], [464.3, '$600,000'], [484.3, '$500,000'], [504.3, '$400,000'], [525.3, '$300,000'], [545.3, '$200,000'], [565.3, '$100,000'], [585.3, '-']],
  bars: [
    zbar(1524, [939, 879, 807]),
    zbar(1618, [903, 753, 528]),
    zbar(1713, [900, 744, 513]),
    zbar(1807, [897, 735, 495]),
    zbar(1902, [891, 723, 474]),
    zbar(1996, [888, 711, 450]),
  ],
  barW: 54.5,
  bottom: zy(973),
  colors: [BLUE, ORANGE, GRAY],
  catY: 616,
  catX: [1531, 1625.5, 1720, 1814, 1908.7, 2003],
  rotate: true,
  axisW: 2,
};

const StackChart = ({ def, children }: { def: ChartDef; children?: React.ReactNode }) => (
  <ChartSvg viewBox={def.box.join(' ')} preserveAspectRatio="none">
    <ChartTitle x={def.titleX} y={356}>{def.title}</ChartTitle>
    {def.ticks.map(([y, label], i) => (
      <g key={label}>
        <path d={`M${def.gridX[0]} ${y}H${def.gridX[1]}`} stroke="#d9d9d9" strokeWidth={i === def.ticks.length - 1 && def.axisW ? def.axisW : 1} />
        <Tick x={def.tickX} y={y + 5}>{label}</Tick>
      </g>
    ))}
    {def.bars.map((b, i) => (
      <g key={i}>
        {b.tops.map((top, j) => {
          const below = j === 0 ? def.bottom : b.tops[j - 1];
          return <rect key={j} x={b.x} y={top} width={def.barW} height={below - top} fill={def.colors[j]} />;
        })}
      </g>
    ))}
    {def.catX.map((x, i) => (
      <Cat key={i} x={x} y={def.catY} transform={def.rotate ? `rotate(-35 ${x} ${def.catY})` : undefined}>{CATS[i]}</Cat>
    ))}
    {children}
  </ChartSvg>
);

const LegendRow = ({ y, items }: { y: number; items: [number, number, string, number, string][] }) => (
  <>
    {items.map(([x, w, fill, tx, label]) => (
      <g key={label}>
        <rect x={x} y={y - 5} width={w} height={9} fill={fill} />
        <Legend x={tx} y={y + 5}>{label}</Legend>
      </g>
    ))}
  </>
);

const SEGMENTS = ['Other Type 8', 'Other Type 7', 'Other Type 6', 'Other Type 5', 'Other Type 4', 'Other Type 3', 'Other Type 2', 'International Travel', 'Luxury Travel', 'Adventure Tourism', 'Leisure Travel', 'Business Travel'];
const SEG_Y = [394, 466, 541, 613, 685, 757, 829, 901, 973, 1045, 1117, 1189];

const BandClip = ({ box, items, legend }: { box: [number, number, number]; items: [number, string][]; legend?: [number, string] }) => (
  <ChartSvg viewBox={`${box[0]} 296 ${box[1]} ${box[2]}`}>
    {items.map(([x, label], i) => (
      <Cat key={i} $start x={x} y={305} transform={`rotate(-35 ${x} 305)`}>{label}</Cat>
    ))}
    {legend && (
      <>
        <rect x={legend[0]} y={292} width={6} height={5} fill={legend[1]} />
        <Legend $fs={11.2} x={legend[0] + 8} y={298}>Business Travel</Legend>
      </>
    )}
  </ChartSvg>
);

/* ---------- data ---------- */
const COLS = 'A B C D E F G H I J K L M N O P Q R S T U V W X Y Z AA AB AC AD AE'.split(' ');
const ROWS = Array.from({ length: 43 }, (_, i) => 45 + i);
const MENU: [string, number][] = [['File', 48], ['Home', 88], ['Insert', 48], ['Page Layout', 136], ['Formulas', 74], ['Data', 80], ['Review', 56], ['View', 82], ['Developer', 78], ['Help', 82]];
const MONTH_X = [57, 111.5, 157.5, 211, 257, 311, 358, 411, 458, 512, 558, 611];

const YEL = '#FFFFCC';
const GRY = '#808080';
const PUR = '#7030A0';
const TABS: [string, number, string, string, number][] = [
  ['Index', 64, GRY, '#fff', 11],
  ['Global Control', 136, YEL, '#111', 11],
  ['Revenue Streams', 157, YEL, '#111', 11],
  ['Expenses', 92, YEL, '#111', 11],
  ['Startup Costs', 126, YEL, '#111', 11],
  ['Debt Schedule', 135, YEL, '#111', 11],
  ['Cap Ex', 74, YEL, '#111', 10],
  ['Cap Table', 99, YEL, '#111', 11],
  ['Terminal Value', 139, YEL, '#111', 11],
  ['IS- M', 63, GRY, '#fff', 11],
  ['IS- A', 58, GRY, '#fff', 11],
  ['BS- M', 68, GRY, '#fff', 11],
  ['BS- A', 64, GRY, '#fff', 11],
  ['CF- M', 68, GRY, '#fff', 11],
  ['CF- A', 63, GRY, '#fff', 11],
  ['Distributions', 122, PUR, '#fff', 12],
  ['Executive Summary', 174, PUR, '#fff', 11],
];

const L1: [number, number, number][] = [[2, 18, 3], [4, 16, 9], [2, 18, 15]];

export default function App() {
  return (
    <Window>
      <Global />

      <TitleBar>
        <TitleLeft>
          <Cell $w={20}><XlLogo /></Cell>
          <Cell $w={74} $ml={17} $fs={14.5}>AutoSave</Cell>
          <Cell $w={53} $ml={1}><Toggle>Off</Toggle></Cell>
          <Cell $w={20} $ml={17}><SaveIcon /></Cell>
          <Cell $w={18} $ml={16}><UndoIcon /></Cell>
          <Cell $w={10} $ml={7}><Chev c="#b5b5b5" /></Cell>
          <Cell $w={20} $ml={12}><UndoIcon flip /></Cell>
          <Cell $w={10} $ml={6}><Chev c="#b5b5b5" /></Cell>
          <Cell $w={10} $ml={16}><CustomizeIcon /></Cell>
          <Cell $w={92} $ml={31} $fs={14}>Travel Agency</Cell>
          <Cell $w={10} $ml={7}><Chev c="#b5b5b5" w={12} /></Cell>
        </TitleLeft>
        <SearchBox><SearchGlass />Search</SearchBox>
        <TitleRight>
          <Cell $fs={14}>Jason Varner</Cell>
          <Cell $w={52}><Avatar>JV</Avatar></Cell>
          <Cell $w={64}><Diamond /></Cell>
          <Cell $w={56}><PenIcon /></Cell>
          <Cell $w={60}><WinMin /></Cell>
          <Cell $w={60}><WinRestore /></Cell>
          <Cell $w={60}><WinClose /></Cell>
        </TitleRight>
      </TitleBar>

      <MenuBar>
        {MENU.map(([label, w]) => (
          <MenuItem key={label} $w={w} $on={label === 'Home'}>{label}</MenuItem>
        ))}
        <MenuEnd>
          <CommentsBtn><CommentGlyph />Comments</CommentsBtn>
          <ShareBtn><ShareGlyph />Share<Cell $w={16} $ml={3}><Chev c="#fff" /></Cell></ShareBtn>
          <Cell $w={57}><PeopleGlyph /></Cell>
        </MenuEnd>
      </MenuBar>

      <Ribbon>
        <Group $w={215}>
          <GroupBody>
            <Big $w={54} $ml={14}>
              <BigIcon><PasteIcon /></BigIcon>
              <BigLine>Paste</BigLine>
              <BigLine><Chev /></BigLine>
            </Big>
            <SmallList $pl={6}>
              <SmallItem $gap={9}><CutIcon />Cut</SmallItem>
              <SmallItem $gap={5}><CopyIcon />Copy<Cell $w={30}><Chev /></Cell></SmallItem>
              <SmallItem $gap={3}><BrushIcon />Format Painter</SmallItem>
            </SmallList>
          </GroupBody>
          <GroupLabel $launch>Clipboard</GroupLabel>
          <Launcher><Launch /></Launcher>
        </Group>
        <GroupSep />

        <Group $w={291}>
          <GroupBody>
            <Rows $pl={10}>
              <Row $h={30}>
                <Combo $w={143}>Calibri<Chev /></Combo>
                <Combo $w={62} $ml={3}>11<Chev /></Combo>
                <Cell $w={30} $ml={2}><GrowWrap><GrowLetter $fs={20}>A</GrowLetter><GrowMark up /></GrowWrap></Cell>
                <Cell $w={32}><GrowWrap><GrowLetter $fs={17}>A</GrowLetter><GrowMark /></GrowWrap></Cell>
              </Row>
              <Row $h={32} $mt={8}>
                <Bold $w={31} $fs={16}>B</Bold>
                <Italic $w={32} $fs={16}>I</Italic>
                <Under $w={30} $fs={15}>U</Under>
                <Cell $w={18}><Chev /></Cell>
                <Cell $w={10}><RowSep /></Cell>
                <Cell $w={24}><Borders /></Cell>
                <Cell $w={22}><Chev /></Cell>
                <Cell $w={4}><RowSep /></Cell>
                <Cell $w={32}><FillColor /></Cell>
                <Cell $w={17}><Chev /></Cell>
                <Cell $w={36}><ColorLetter $bar="#ff0000">A</ColorLetter></Cell>
                <Cell $w={10}><Chev /></Cell>
              </Row>
            </Rows>
          </GroupBody>
          <GroupLabel $launch>Font</GroupLabel>
          <Launcher><Launch /></Launcher>
        </Group>
        <GroupSep />

        <Group $w={362}>
          <GroupBody>
            <Rows $w={179} $pl={9}>
              <Row $h={30}>
                <Cell $w={32}><Lines rows={[[2, 18, 3], [4, 16, 8], [2, 18, 13]]} /></Cell>
                <Cell $w={32}><Lines rows={L1} /></Cell>
                <Cell $w={32}><Pressed><Lines rows={[[2, 18, 8], [4, 16, 13], [2, 18, 18]]} /></Pressed></Cell>
                <RowSep />
                <Cell $w={33}><Orient /></Cell>
                <Cell $w={10}><Chev /></Cell>
              </Row>
              <Row $h={32} $mt={8}>
                <Cell $w={32}><Lines rows={[[2, 18, 3], [2, 14, 9], [2, 18, 15]]} /></Cell>
                <Cell $w={32}><Lines rows={[[2, 18, 3], [4, 16, 9], [2, 18, 15]]} /></Cell>
                <Cell $w={32}><Lines rows={[[2, 18, 3], [6, 18, 9], [2, 18, 15]]} /></Cell>
                <RowSep />
                <Cell $w={33}><Indent rev /></Cell>
                <Cell $w={32}><Indent /></Cell>
              </Row>
            </Rows>
            <Rows $pl={12} $sep>
              <Row $h={30}><Cell $w={20}><WrapIcon /></Cell><Cell $ml={4}>Wrap Text</Cell></Row>
              <Row $h={32} $mt={8}><Cell $w={20}><MergeIcon /></Cell><Cell $ml={4}>Merge &amp; Center</Cell><Cell $w={12} $ml={12}><Chev /></Cell></Row>
            </Rows>
          </GroupBody>
          <GroupLabel $launch>Alignment</GroupLabel>
          <Launcher><Launch /></Launcher>
        </Group>
        <GroupSep />

        <Group $w={199}>
          <GroupBody>
            <Rows $pl={10}>
              <Row $h={30}><Combo $w={179}>General<Chev /></Combo></Row>
              <Row $h={32} $mt={8}>
                <Cell $w={28} $fs={19}>$</Cell>
                <Cell $w={20}><Chev /></Cell>
                <Cell $w={34} $fs={20}>%</Cell>
                <CommaGlyph $w={32} $fs={34}>,</CommaGlyph>
                <RowSep />
                <Cell $w={34}><DecIcon /></Cell>
                <Cell $w={30}><DecIcon more /></Cell>
              </Row>
            </Rows>
          </GroupBody>
          <GroupLabel $launch>Number</GroupLabel>
          <Launcher><Launch /></Launcher>
        </Group>
        <GroupSep />

        <Group $w={744}>
          <GroupBody>
            <Big $w={80} $ml={16}>
              <BigIcon $pt={8}><CondIcon /></BigIcon>
              <BigLine>Conditional</BigLine>
              <BigLine>Formatting<Chev w={8} /></BigLine>
            </Big>
            <Big $w={80} $ml={3}>
              <BigIcon $pt={8}><FormatTableIcon /></BigIcon>
              <BigLine>Format as</BigLine>
              <BigLine>Table<Chev w={8} /></BigLine>
            </Big>
            <Gallery>
              <StyleGrid>
                <NormalCell $bg="#fff" $c="#000">Normal</NormalCell>
                <StyleCell $bg="#FFC7CE" $c="#9C0006">Bad</StyleCell>
                <StyleCell $bg="#C6EFCE" $c="#006100">Good</StyleCell>
                <StyleCell $bg="#FFEB9C" $c="#9C5700">Neutral</StyleCell>
                <StyleCell $bg="#F2F2F2" $c="#FA7D00" $bold $bd="1px solid #7F7F7F">Calculation</StyleCell>
                <StyleCell $bg="#A5A5A5" $c="#fff" $bold $bd="3px double #3F3F3F">Check Cell</StyleCell>
                <StyleCell $c="#7F7F7F" $it>Explanatory T...</StyleCell>
                <StyleCell $c="#954F72" $u>Followed Hyp...</StyleCell>
              </StyleGrid>
              <GalleryScroll>
                <GalleryBtn><Chev c="#aaa" w={9} /></GalleryBtn>
                <GalleryBtn $line><Chev w={9} /></GalleryBtn>
                <GalleryBtn $line><CustomizeIcon /></GalleryBtn>
              </GalleryScroll>
            </Gallery>
          </GroupBody>
          <GroupLabel>Styles</GroupLabel>
        </Group>
        <GroupSep />

        <Group $w={179}>
          <GroupBody>
            <Big $w={54} $ml={9}>
              <BigIcon $pt={8}><InsertCellsIcon /></BigIcon>
              <BigLine>Insert</BigLine>
              <BigLine><Chev w={9} /></BigLine>
            </Big>
            <Big $w={54}>
              <BigIcon $pt={8}><DeleteCellsIcon /></BigIcon>
              <BigLine>Delete</BigLine>
              <BigLine><Chev w={9} /></BigLine>
            </Big>
            <Big $w={54}>
              <BigIcon><FormatCellsIcon /></BigIcon>
              <BigLine>Format</BigLine>
              <BigLine><Chev w={9} /></BigLine>
            </Big>
          </GroupBody>
          <GroupLabel>Cells</GroupLabel>
        </Group>
        <GroupSep />

        <Group $w={256}>
          <GroupBody>
            <SmallList $w={129} $pl={15}>
              <SmallItem><SigmaIcon />AutoSum<Cell $w={12} $ml={9}><Chev w={9} /></Cell></SmallItem>
              <SmallItem $gap={6}><FillIcon />Fill<Chev w={8} /></SmallItem>
              <SmallItem $gap={6}><ClearIcon />Clear<Chev w={8} /></SmallItem>
            </SmallList>
            <Big $w={60}>
              <BigIcon><SortIcon /></BigIcon>
              <BigLine>Sort &amp;</BigLine>
              <BigLine>Filter<Chev w={8} /></BigLine>
            </Big>
            <Big $w={58}>
              <BigIcon><FindIcon /></BigIcon>
              <BigLine>Find &amp;</BigLine>
              <BigLine>Select<Chev w={8} /></BigLine>
            </Big>
          </GroupBody>
          <GroupLabel>Editing</GroupLabel>
        </Group>
        <GroupSep />

        <Group $w={76}>
          <GroupBody>
            <Big $w={76}>
              <BigIcon><AddinsIcon /></BigIcon>
              <BigLine>Add-ins</BigLine>
            </Big>
          </GroupBody>
          <GroupLabel>Add-ins</GroupLabel>
        </Group>
        <GroupSep />

        <Group $w={76}>
          <GroupBody>
            <Big $w={76}>
              <BigIcon><AnalyzeIcon /></BigIcon>
              <BigLine>Analyze</BigLine>
              <BigLine>Data</BigLine>
            </Big>
          </GroupBody>
        </Group>
        <GroupSep />
        <Collapse><Chev w={13} /></Collapse>
      </Ribbon>

      <FormulaBar>
        <NameBox $w={126}>AC25<Chev w={12} /></NameBox>
        <Cell $w={26}><VDots /></Cell>
        <FieldBox $w={91}>
          <Cell $w={30}><XMark /></Cell>
          <Cell $w={28}><CheckMark /></Cell>
          <FxMark $w={32} $fs={20}>fx</FxMark>
        </FieldBox>
        <Cell $w={6} />
        <FormulaInput><Chev w={12} /></FormulaInput>
      </FormulaBar>

      <Sheet>
        <SheetMain>
          <ColHeader>
            <Corner />
            {COLS.map(c => <ColHead key={c}>{c}</ColHead>)}
          </ColHeader>
          <SheetBody>
            <RowHeads>
              {ROWS.map(r => <RowHead key={r}>{r}</RowHead>)}
            </RowHeads>
            <Canvas>
              <BandRow>
                <BandPart $w={684.5}>
                  <BandClip box={[33.5, 684.5, 25]} items={MONTH_X.map((x, i): [number, string] => [x, i % 2 ? 'Jul-24' : 'Jan-24'])} />
                </BandPart>
                <BandPart $w={685.5} $bl={2} $br={2}>
                  <BandClip box={[720.5, 681.5, 25]} items={[[783, 'FY 2024'], [861, 'FY 2025'], [940, 'FY 2026'], [1019, 'FY 2027'], [1098, 'FY 2028'], [1176, 'FY 2029']]} legend={[1285, BLUE]} />
                </BandPart>
                <BandPart $w={686} $br={2}>
                  <BandClip box={[1404, 684, 25]} items={[[1505, 'FY 2024'], [1577, 'FY 2025'], [1649, 'FY 2026'], [1721, 'FY 2027'], [1793, 'FY 2028'], [1865, 'FY 2029']]} legend={[1970, BLUE]} />
                </BandPart>
              </BandRow>
              <ChartRow>
                <ChartCard $w={685} $h={363}>
                  <StackChart def={revenue}>
                    <LegendRow y={659} items={[[135, 9, GRAY, 147, 'Bookings Commissions - Retail'], [358, 9, GOLD, 370, 'Bookings Fees - Special'], [537, 9, SKY, 549, 'Ad Revenue']]} />
                  </StackChart>
                </ChartCard>
                <ChartCard $w={685.5} $h={364} $heavy>
                  <StackChart def={commissions}>
                    {SEGMENTS.map((label, i) => (
                      <g key={label}>
                        <rect x={1284} y={zy(SEG_Y[i]) - 3} width={6} height={6} fill={commissions.colors[11 - i]} />
                        <Legend $fs={11.2} x={1292.6} y={zy(SEG_Y[i]) + 4}>{label}</Legend>
                      </g>
                    ))}
                  </StackChart>
                </ChartCard>
                <ChartCard $w={686} $h={364} $heavy $right $noleft>
                  <StackChart def={fees}>
                    <LegendRow y={660} items={[[1658, 9, BLUE, 1670, 'Type 1'], [1723, 9, ORANGE, 1735, 'Type 2'], [1789, 9, GRAY, 1801, 'Type 3']]} />
                  </StackChart>
                </ChartCard>
              </ChartRow>
            </Canvas>
          </SheetBody>
        </SheetMain>
        <VScroll>
          <VTrack>
            <TriUp />
            <VThumb />
            <VArrowDown><TriUp flip /></VArrowDown>
          </VTrack>
        </VScroll>
      </Sheet>

      <TabBar>
        <NavCell $w={44}><NavArrow c="#999" /></NavCell>
        <NavCell $w={34} $mr={49}><NavArrow right c="#555" /></NavCell>
        {TABS.map(([label, w, bg, c, gap]) => (
          <React.Fragment key={label}>
            <Tab $w={w} $bg={bg} $c={c}>{label}</Tab>
            <TabGap $w={gap} />
          </React.Fragment>
        ))}
        <ActiveTab>Visuals</ActiveTab>
        <TabGap $w={12} />
        <PeekTab />
        <NavCell $w={39}><Dots>···</Dots></NavCell>
        <NavCell $w={40}><PlusMark /></NavCell>
        <NavCell $w={41}><VDots /></NavCell>
        <HTrack><TriLeft /><HThumb /><TriLeft flip /></HTrack>
      </TabBar>

      <StatusBar>
        Ready
        <Cell $w={18} $ml={25}><MacroIcon /></Cell>
        <Cell $w={20} $ml={21}><AccessIcon /></Cell>
        <Cell $ml={3} $fs={12.5}>Accessibility: Investigate</Cell>
        <StatusRight>
          <ViewBtn $on><GridView /></ViewBtn>
          <ViewBtn><PageView /></ViewBtn>
          <ViewBtn><BreakView /></ViewBtn>
          <Cell $w={24} $fs={16}>−</Cell>
          <Slider />
          <Cell $w={22} $fs={16}>+</Cell>
          <Cell $w={52} $fs={12.5}>100%</Cell>
        </StatusRight>
      </StatusBar>

      <Taskbar>
        <Cell $w={61}><WinLogo /></Cell>
        <TaskSearch>
          <SearchGlass s={22} c="#222" />
          Type here to search
          <Flowers><FlowerArt /></Flowers>
        </TaskSearch>
        <TaskIcon><TaskView /></TaskIcon>
        <TaskIcon $open><Explorer /></TaskIcon>
        <TaskIcon><Snip /></TaskIcon>
        <TaskIcon $open><Opera /></TaskIcon>
        <TaskIcon $open><Chrome /></TaskIcon>
        <TaskIcon $open><Notepad /></TaskIcon>
        <TaskIcon $open><XlLogo s={30} /></TaskIcon>
        <Tray>
          <Cell $w={35}><WeatherBadge><BadgeDot>1</BadgeDot></WeatherBadge></Cell>
          <TrayText $w={120} $fs={16}>70°F&nbsp;&nbsp;Sunny</TrayText>
          <Cell $w={28}><Caret /></Cell>
          <Cell $w={30}><MeetIcon /></Cell>
          <Cell $w={30}><CloudIcon /></Cell>
          <Cell $w={28}><NetIcon /></Cell>
          <Cell $w={24}><SpeakerIcon /></Cell>
          <Clock><span>11:03 AM</span><span>10/2/2023</span></Clock>
          <Cell $w={34}><NotifIcon /></Cell>
          <Cell $w={24} />
        </Tray>
      </Taskbar>
    </Window>
  );
}
